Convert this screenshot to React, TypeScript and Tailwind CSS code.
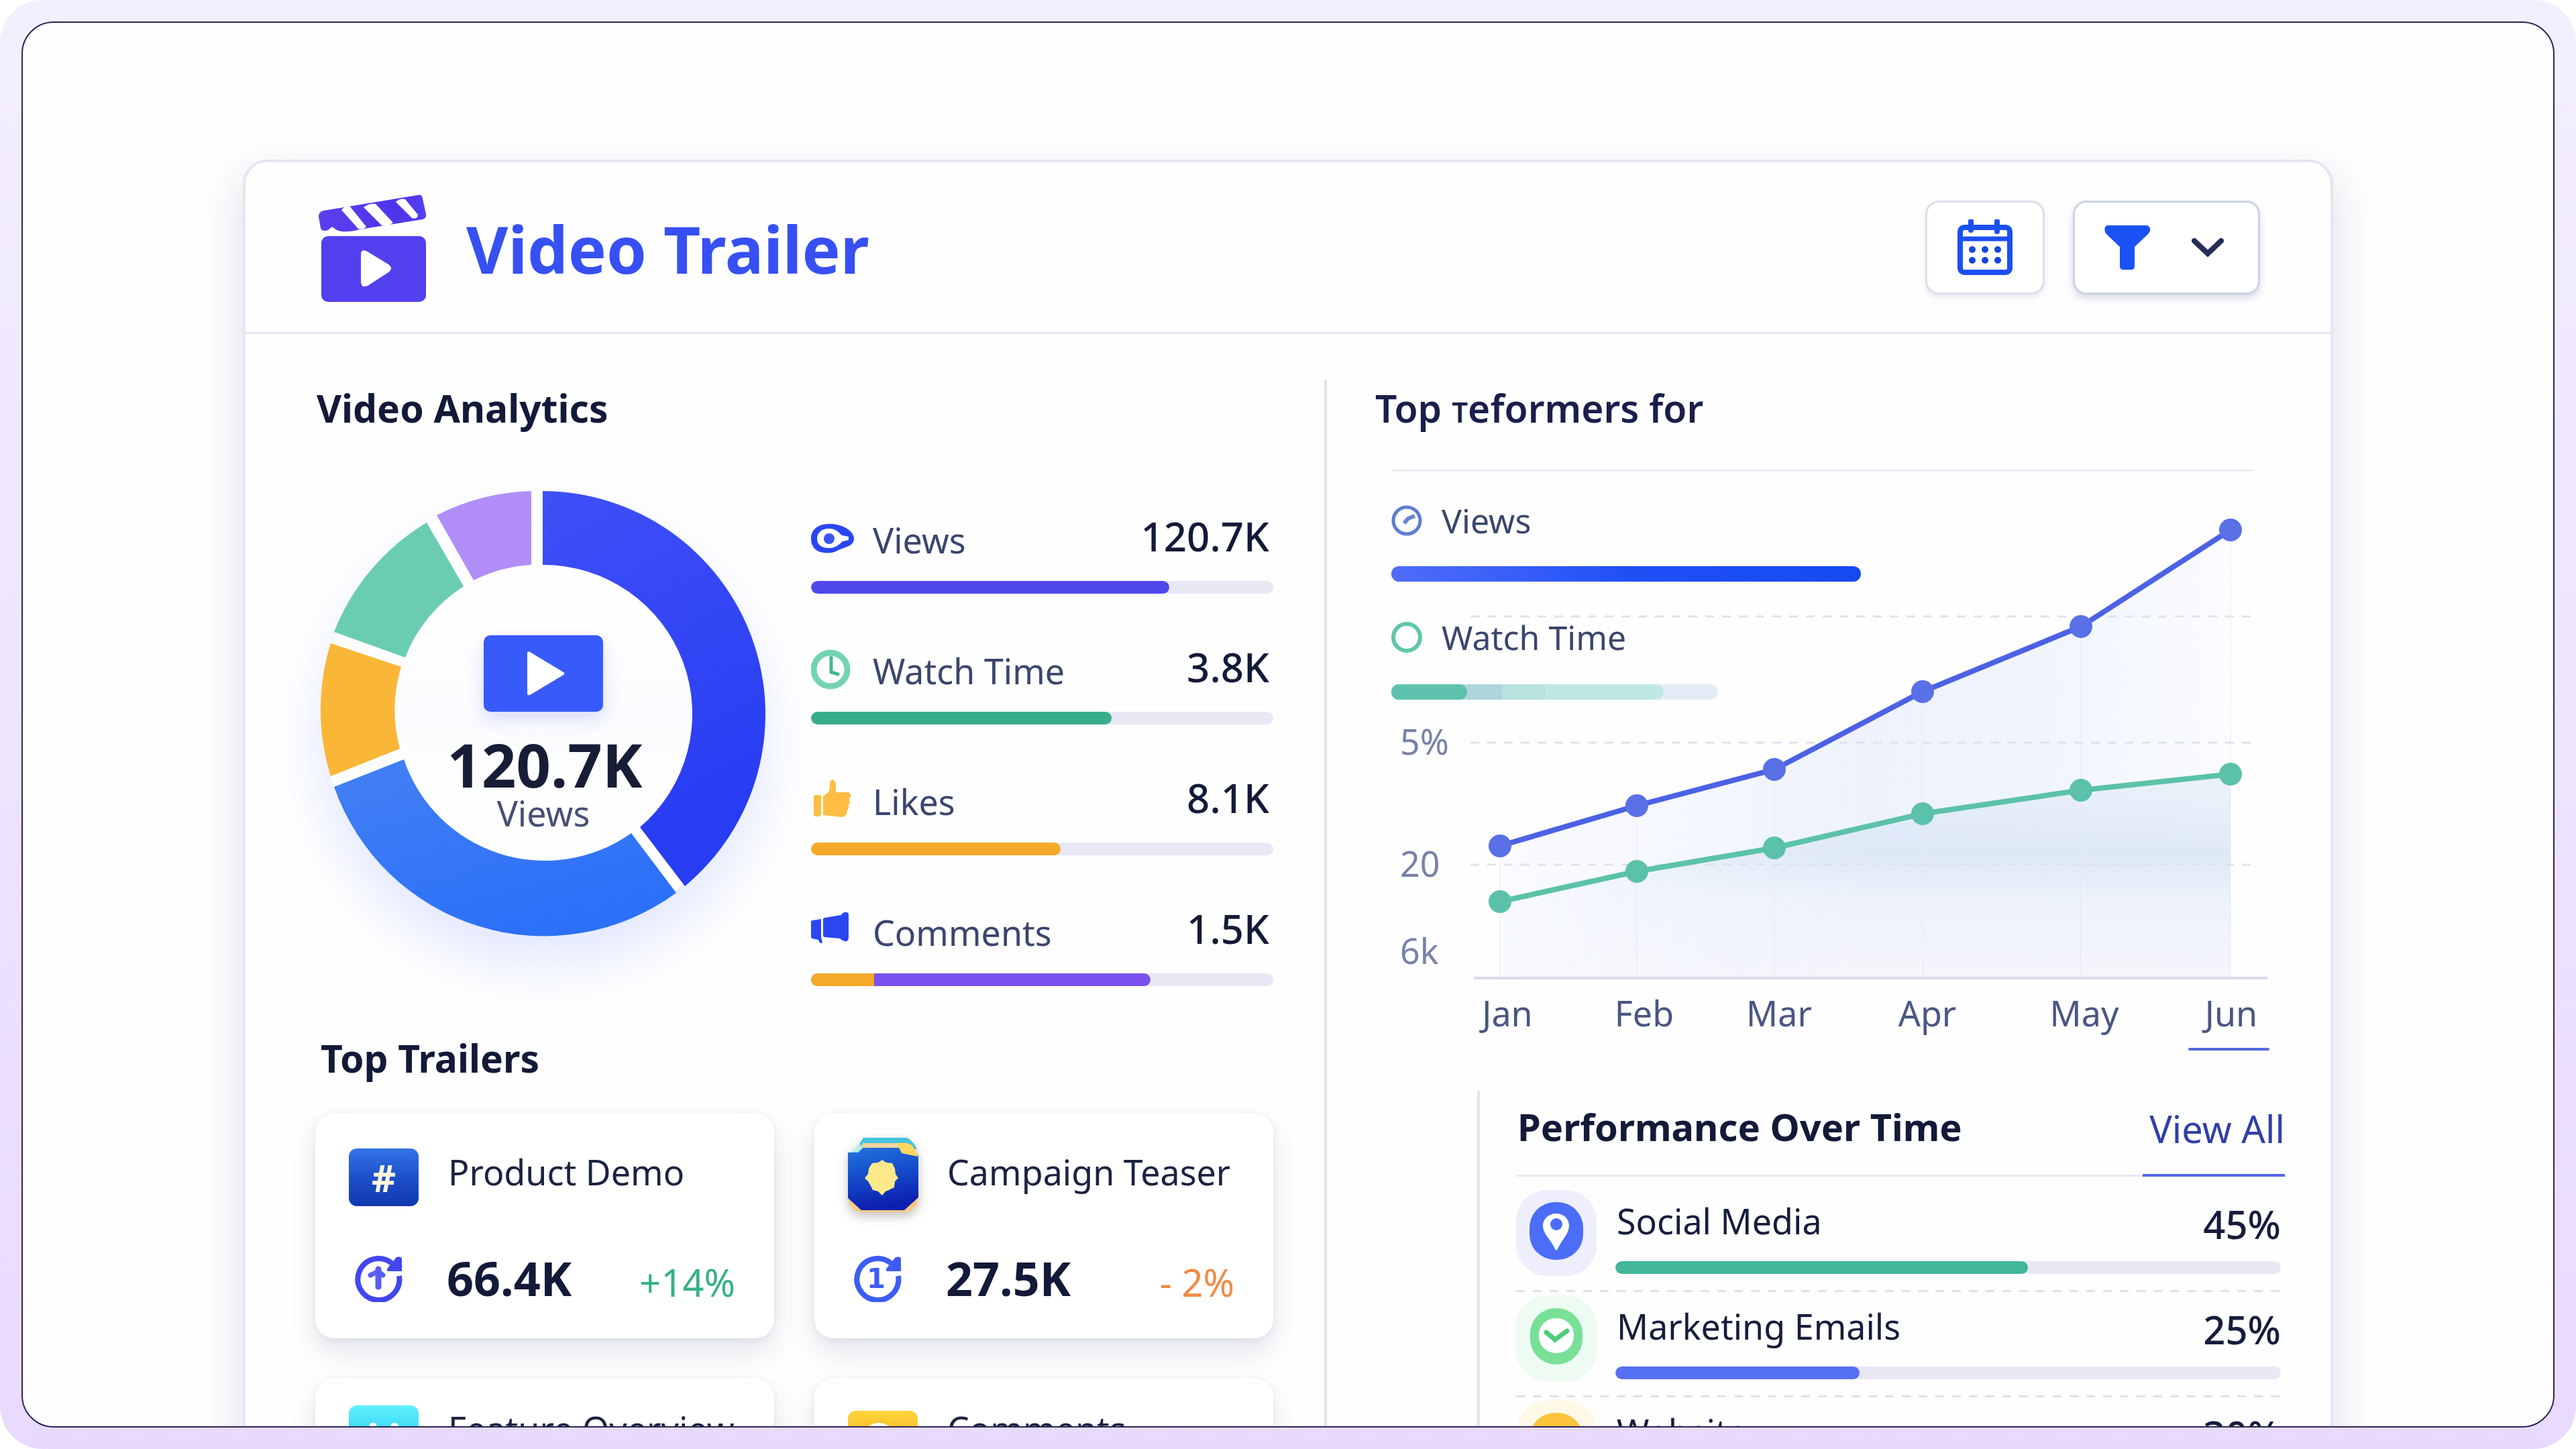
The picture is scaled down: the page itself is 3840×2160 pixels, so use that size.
import type { ReactNode } from "react";

interface Metric {
  id: string;
  label: string;
  value: string;
  percent: number;
  color: string;
  icon: ReactNode;
  lead?: number;
}

interface Trailer {
  id: string;
  name: string;
  views: string;
  change: string;
  up: boolean;
  mark: ReactNode;
  tile: ReactNode;
  padding: string;
}

interface Channel {
  id: string;
  label: string;
  share: string;
  percent: number;
  color: string;
  halo: string;
  icon: ReactNode;
}

function LogoIcon() {
  return (
    <svg viewBox="0 0 162 162" className="h-[162px] w-[162px] shrink-0" aria-hidden="true">
      <defs>
        <linearGradient id="logo" x1="0" y1="0" x2="1" y2="0">
          <stop offset="0" stopColor="#5a40ee" />
          <stop offset="0.75" stopColor="#4d35ea" />
          <stop offset="1" stopColor="#5340f2" />
        </linearGradient>
      </defs>
      <rect x="5" y="64" width="156" height="98" rx="10" fill="#523fee" />
      <path d="M64 91 Q64 83 72 86 L105 106 Q113 112 105 118 L74 138 Q64 142 64 132 Z" fill="#fff" />
      <path
        d="M1 35 Q1 28 8 26 L148 3 Q155 1 156 8 L161 31 Q162 37 156 39 L62 54 Q40 60 28 55 L21 50 L15 55 Q6 58 4 52 Z"
        fill="url(#logo)"
      />
      <path d="M35 25 Q41 17 48 20 L72 50 Q67 55 60 53 Z" fill="#fff" />
      <path d="M68 21 Q76 15 86 16 L112 44 Q104 50 95 48 Z" fill="#fff" />
      <path d="M116 13 Q122 7 130 9 L149 32 Q148 40 140 37 Z" fill="#fff" />
    </svg>
  );
}

function CalendarIcon() {
  return (
    <svg viewBox="0 0 82 84" className="h-[84px] w-[82px]" fill="none" aria-hidden="true">
      <rect x="4" y="12" width="74" height="67" rx="6" stroke="#1a4ff2" strokeWidth="8" />
      <path d="M4 29H78" stroke="#1a4ff2" strokeWidth="7" />
      <path d="M20 3V16M59 3V18" stroke="#1a4ff2" strokeWidth="8" strokeLinecap="round" />
      {[22, 41, 60].map((x) => (
        <g key={x} fill="#1745dc">
          <circle cx={x} cy="45" r="5" />
          <circle cx={x} cy="61" r="5" />
        </g>
      ))}
    </svg>
  );
}

function FilterIcon() {
  return (
    <svg viewBox="0 0 68 66" className="h-[66px] w-[68px]" aria-hidden="true">
      <path
        d="M4 0H64Q69 2 68 8L66 12L45 32V61Q45 66 40 66H28Q23 66 23 61V32L2 12Q-2 3 4 0Z"
        fill="#1a52f5"
      />
    </svg>
  );
}

function ChevronIcon() {
  return (
    <svg viewBox="0 0 48 28" className="h-[28px] w-[48px]" fill="none" aria-hidden="true">
      <path d="M4 4L24 23L44 4" stroke="#252e54" strokeWidth="8" strokeLinecap="round" />
    </svg>
  );
}

function EyeIcon() {
  return (
    <svg viewBox="0 0 64 64" className="h-16 w-16" aria-hidden="true">
      <path d="M0 32C0 17 12 10 28 10C46 10 64 20 64 32C64 42 53 44 43 48C34 53 27 54 20 53C8 52 0 45 0 32Z" fill="#2b47f2" />
      <path d="M9 32C9 22 18 16 28 17C39 18 42 24 46 27L56 29V34L47 36C42 41 36 46 27 46C17 46 9 42 9 32Z" fill="#fff" />
      <circle cx="27" cy="32" r="8" fill="#3a55f0" />
    </svg>
  );
}

function ClockIcon() {
  return (
    <svg viewBox="0 0 64 64" className="h-16 w-16" fill="none" aria-hidden="true">
      <circle cx="29" cy="32" r="25" stroke="#73d3b3" strokeWidth="9" />
      <path d="M30 14V36L40 39" stroke="#3fb795" strokeWidth="5" strokeLinecap="round" />
    </svg>
  );
}

function ThumbIcon() {
  return (
    <svg viewBox="0 0 64 64" className="h-16 w-16" fill="#fdbd42" aria-hidden="true">
      <rect x="4" y="24" width="11" height="32" rx="3" />
      <path d="M18 26L26 20C29 15 27 8 29 3C31 -1 37 2 37 9L37 20L55 20Q60 21 59 27L57 29L58 36L56 38L56 44L54 46L53 52Q51 57 45 57L26 55L18 54Z" />
    </svg>
  );
}

function MegaphoneIcon() {
  return (
    <svg viewBox="0 0 64 64" className="h-16 w-16" fill="#2b47f2" aria-hidden="true">
      <path d="M2 16L15 14V41L17 48Q15 52 12 48L11 45L2 43Q0 43 0 40V19Q0 16 2 16Z" />
      <path d="M21 12L45 8Q48 3 53 4Q56 4 56 8V42Q56 48 50 47Q46 46 43 43L21 41Q18 41 18 38V15Q18 12 21 12Z" />
    </svg>
  );
}

function RefreshIcon({ color, children }: { color: string; children: ReactNode }) {
  return (
    <svg viewBox="0 0 72 72" className="h-[72px] w-[72px]" fill="none" aria-hidden="true">
      <path d="M67 33A31 31 0 1 1 56 14" stroke={color} strokeWidth="8" />
      <path d="M63 5Q71 3 71 8V26H50Q47 24 51 20Z" fill={color} />
      {children}
    </svg>
  );
}

const upMark = (
  <RefreshIcon color="#4246ee">
    <path d="M36 23V49" stroke="#5a5cf0" strokeWidth="9" strokeLinecap="round" />
    <path d="M24 32L36 26L43 32" stroke="#5a5cf0" strokeWidth="7" strokeLinecap="round" />
  </RefreshIcon>
);

const firstMark = (
  <RefreshIcon color="#3d5cf5">
    <text x="34" y="51" textAnchor="middle" fontSize="40" fontWeight="700" fill="#3d5cf5" className="font-['DejaVu_Sans']">
      1
    </text>
  </RefreshIcon>
);

const hashTile = (
  <div className="flex h-[86px] w-[104px] items-center justify-center rounded-xl bg-linear-to-b from-[#3474e6] via-[#1d50cb] to-[#1038ae] text-[56px] leading-none font-bold text-[#fff6dd]">
    #
  </div>
);

const badgeTile = (
  <svg viewBox="0 0 106 112" className="-mt-4 h-[112px] w-[106px] drop-shadow-[0_6px_8px_rgba(60,50,40,0.3)]" aria-hidden="true">
    <defs>
      <linearGradient id="badge" x1="0" y1="0" x2="0.2" y2="1">
        <stop offset="0" stopColor="#2274dc" />
        <stop offset="0.55" stopColor="#1346c8" />
        <stop offset="1" stopColor="#0d1fae" />
      </linearGradient>
    </defs>
    <path d="M0 82L2 98Q8 109 20 111H86Q98 109 103 98L106 82Z" fill="#fcc983" />
    <path d="M23 0H88Q98 5 103 17L60 20L6 22Q12 20 16 11Z" fill="#45c4dd" />
    <path d="M22 8H78L86 18H18Z" fill="#f3d59c" />
    <path d="M0 22L14 22L22 15H78L105 26V89L84 108H20L0 90Z" fill="url(#badge)" />
    <path d="M2 20Q12 18 17 9L22 15L15 22Z" fill="#b5f2e4" />
    <path d="M73 8Q90 6 96 12L104 24V28L80 23Z" fill="#fbd65f" />
    <path
      d="M51 33L57 37L66 38L70 46L71 54L75 60L70 65L69 74L61 78L56 80L51 86L45 80L37 78L33 70L30 65L25 60L30 54L31 46L36 38L45 37Z"
      fill="#fde98a"
    />
  </svg>
);

const featureTile = (
  <svg viewBox="0 0 104 86" className="h-[86px] w-[104px]" aria-hidden="true">
    <defs>
      <linearGradient id="feature" x1="0" y1="0" x2="0" y2="1">
        <stop offset="0" stopColor="#5df3fd" />
        <stop offset="1" stopColor="#19b4e6" />
      </linearGradient>
    </defs>
    <rect width="104" height="86" rx="12" fill="url(#feature)" />
    <path d="M36 58V31M68 58V31" stroke="#fff" strokeWidth="11" strokeLinecap="round" />
  </svg>
);

const commentTile = (
  <svg viewBox="0 0 104 86" className="mt-2 h-[86px] w-[104px]" aria-hidden="true">
    <defs>
      <linearGradient id="comment" x1="0" y1="0" x2="0" y2="1">
        <stop offset="0" stopColor="#fdd43a" />
        <stop offset="1" stopColor="#f59d16" />
      </linearGradient>
    </defs>
    <rect width="104" height="86" rx="12" fill="url(#comment)" />
    <circle cx="46" cy="42" r="24" fill="#fff" />
  </svg>
);

const metrics: Metric[] = [
  { id: "views", label: "Views", value: "120.7K", percent: 77.5, color: "bg-[#5148ec]", icon: <EyeIcon /> },
  { id: "watch", label: "Watch Time", value: "3.8K", percent: 65, color: "bg-[#37ad8c]", icon: <ClockIcon /> },
  { id: "likes", label: "Likes", value: "8.1K", percent: 54, color: "bg-[#f5a928]", icon: <ThumbIcon /> },
  { id: "comments", label: "Comments", value: "1.5K", percent: 73.5, color: "bg-[#7b52ef]", icon: <MegaphoneIcon />, lead: 18.5 },
];

const trailers: Trailer[] = [
  { id: "demo", name: "Product Demo", views: "66.4K", change: "+14%", up: true, mark: upMark, tile: hashTile, padding: "pt-[52px]" },
  { id: "teaser", name: "Campaign Teaser", views: "27.5K", change: "- 2%", up: false, mark: firstMark, tile: badgeTile, padding: "pt-[52px]" },
  { id: "overview", name: "Feature Overview", views: "18.2K", change: "+9%", up: true, mark: upMark, tile: featureTile, padding: "pt-[40px]" },
  { id: "comments", name: "Comments", views: "12.1K", change: "+5%", up: true, mark: firstMark, tile: commentTile, padding: "pt-[40px]" },
];

const channels: Channel[] = [
  {
    id: "social",
    label: "Social Media",
    share: "45%",
    percent: 62,
    color: "bg-[#42b699]",
    halo: "bg-[#eeeefc]",
    icon: (
      <svg viewBox="0 0 80 86" className="h-[86px] w-[80px]" aria-hidden="true">
        <rect width="80" height="86" rx="38" fill="#4b6df8" />
        <path d="M40 17C51 17 59 25 59 35C59 48 47 57 42 70Q40 73 38 70C33 57 20 48 20 35C20 25 29 17 40 17Z" fill="#fff" />
        <circle cx="40" cy="33" r="9" fill="#4b6df8" />
      </svg>
    ),
  },
  {
    id: "emails",
    label: "Marketing Emails",
    share: "25%",
    percent: 36.7,
    color: "bg-[#5670f3]",
    halo: "bg-[#edfbf2]",
    icon: (
      <svg viewBox="0 0 80 86" className="h-[86px] w-[80px]" fill="none" aria-hidden="true">
        <rect x="1" y="1" width="78" height="84" rx="38" fill="#79e097" />
        <rect x="14" y="16" width="52" height="52" rx="25" fill="#fff" />
        <path d="M25 37L38 48L56 35" stroke="#4bcc7a" strokeWidth="7" strokeLinecap="round" />
      </svg>
    ),
  },
  {
    id: "website",
    label: "Website",
    share: "30%",
    percent: 30,
    color: "bg-[#f5a928]",
    halo: "bg-[#fef8e6]",
    icon: (
      <svg viewBox="0 0 80 86" className="h-[86px] w-[80px]" fill="none" aria-hidden="true">
        <rect width="80" height="86" rx="38" fill="#fbc43c" />
        <circle cx="40" cy="43" r="18" stroke="#fff" strokeWidth="6" />
      </svg>
    ),
  },
];

const months = [
  { label: "Jan", labelX: 173, x: 162, views: 561, watch: 644 },
  { label: "Feb", labelX: 377, x: 366, views: 501, watch: 599 },
  { label: "Mar", labelX: 578, x: 571, views: 447, watch: 564 },
  { label: "Apr", labelX: 799, x: 792, views: 331, watch: 513 },
  { label: "May", labelX: 1033, x: 1028, views: 234, watch: 478 },
  { label: "Jun", labelX: 1252, x: 1251, views: 90, watch: 454 },
];

function Donut() {
  return (
    <svg
      viewBox="0 0 664 664"
      className="col-start-1 row-start-1 h-[664px] w-[664px] overflow-visible drop-shadow-[0_44px_40px_rgba(60,100,255,0.14)]"
      aria-hidden="true"
    >
      <defs>
        <linearGradient id="seg-blue" x1="0" y1="0" x2="0.3" y2="1">
          <stop offset="0" stopColor="#3f50f7" />
          <stop offset="1" stopColor="#273cf3" />
        </linearGradient>
        <linearGradient id="seg-azure" x1="0" y1="0" x2="0.5" y2="1">
          <stop offset="0" stopColor="#4380f4" />
          <stop offset="1" stopColor="#2b70f8" />
        </linearGradient>
        <linearGradient id="hole" x1="0" y1="0" x2="0" y2="1">
          <stop offset="0.3" stopColor="#fefefe" />
          <stop offset="0.5" stopColor="#fafbfe" />
          <stop offset="0.7" stopColor="#fefefe" />
        </linearGradient>
      </defs>
      <circle cx="331" cy="332" r="330" fill="url(#hole)" />
      <path d="M331 0A333 333 0 0 1 543 589L476 501A222 222 0 0 0 331 110Z" fill="url(#seg-blue)" />
      <path d="M530 599A332 332 0 0 1 20 441L124 400A222 222 0 0 0 463 510Z" fill="url(#seg-azure)" />
      <path d="M15 425A332 332 0 0 1 15 227L120 262A222 222 0 0 0 118 384Z" fill="#fab636" />
      <path d="M20 210A332 332 0 0 1 158 47L213 142A222 222 0 0 0 126 248Z" fill="#6acdb1" />
      <path d="M173 36A332 332 0 0 1 314 0V110A222 222 0 0 0 228 133Z" fill="#b18ef7" />
    </svg>
  );
}

function ProgressBar({ label, percent, color, lead }: { label: string; percent: number; color: string; lead?: number }) {
  return (
    <div
      role="progressbar"
      aria-label={label}
      aria-valuenow={percent}
      aria-valuemin={0}
      aria-valuemax={100}
      className="h-[19px] w-full overflow-hidden rounded-full bg-[#e7e8f4]"
    >
      <div className={`h-full overflow-hidden rounded-full ${color}`} style={{ width: `${percent}%` }}>
        {lead && <div className="h-full bg-[#f5a928]" style={{ width: `${lead}%` }} />}
      </div>
    </div>
  );
}

function TrailerCard({ trailer }: { trailer: Trailer }) {
  return (
    <article
      className={`rounded-[28px] bg-white pr-[58px] pb-[41px] pl-[50px] shadow-[0_20px_40px_rgba(50,60,110,0.13),0_2px_10px_rgba(50,60,110,0.08)] ${trailer.padding}`}
    >
      <div className="flex h-[86px] items-start gap-[44px]">
        <div className="w-[104px] shrink-0">{trailer.tile}</div>
        <h3 className="text-[52px] leading-[70px] whitespace-nowrap text-[#1b2340]">{trailer.name}</h3>
      </div>
      <div className="mt-[58px] flex h-[98px] items-center">
        <div className="w-[146px] shrink-0 pl-[8px]">{trailer.mark}</div>
        <span className="text-[70px] leading-[78px] font-bold text-[#131a38]">{trailer.views}</span>
        <span className={`mt-3 ml-auto text-[56px] leading-none whitespace-nowrap ${trailer.up ? "text-[#35b285]" : "text-[#f28a45]"}`}>
          {trailer.change}
        </span>
      </div>
    </article>
  );
}

function TrendChart() {
  const viewsLine = months.map((m) => `${m.x},${m.views}`).join(" ");
  const watchLine = months.map((m) => `${m.x},${m.watch}`).join(" ");

  return (
    <svg viewBox="0 0 1332 868" className="col-start-1 row-start-1 w-full" role="img" aria-label="Views and watch time from January to June">
      <defs>
        <linearGradient id="area-views" x1="0" y1="0" x2="1" y2="0">
          <stop offset="0" stopColor="#f5f8fe" stopOpacity="0.5" />
          <stop offset="0.5" stopColor="#edf2fd" />
          <stop offset="0.75" stopColor="#f1f5fd" />
          <stop offset="1" stopColor="#fafcfe" />
        </linearGradient>
        <linearGradient id="area-watch" x1="0" y1="0" x2="0" y2="1">
          <stop offset="0.1" stopColor="#dbe7f6" stopOpacity="0.5" />
          <stop offset="0.4" stopColor="#dce9f5" />
          <stop offset="0.6" stopColor="#ecf2fb" />
          <stop offset="1" stopColor="#f5f5fb" />
        </linearGradient>
        <linearGradient id="fade" x1="0" y1="0" x2="1" y2="0">
          <stop offset="0" stopColor="#fff" stopOpacity="0.1" />
          <stop offset="0.5" stopColor="#fff" />
        </linearGradient>
        <mask id="fade-left">
          <rect x="162" y="400" width="1092" height="360" fill="url(#fade)" />
        </mask>
      </defs>
      <path d="M2 1H1285" stroke="#e5e6f1" strokeWidth="3" />
      <polygon points={`162,758 ${viewsLine} 1251,758`} fill="url(#area-views)" />
      <polygon points={`162,758 ${watchLine} 1251,758`} fill="url(#area-watch)" mask="url(#fade-left)" />
      {months.map((m) => (
        <path key={m.label} d={`M${m.x} ${m.views}V758`} stroke="#e6eaf5" strokeWidth="2" opacity="0.5" />
      ))}
      {[219, 407, 589].map((y) => (
        <path key={y} d={`M118 ${y}H1292`} stroke="#dfe2ee" strokeWidth="3" strokeDasharray="13 12" />
      ))}
      <path d="M123 758H1306" stroke="#d9dbea" strokeWidth="4" />
      <polyline points={viewsLine} fill="none" stroke="#4c62e4" strokeWidth="8" />
      <polyline points={watchLine} fill="none" stroke="#5bc2a8" strokeWidth="8" />
      {months.map((m) => (
        <g key={m.label}>
          <circle cx={m.x} cy={m.views} r="17" fill="#5a70e6" />
          <circle cx={m.x} cy={m.watch} r="17" fill="#5bc1ab" />
        </g>
      ))}
      <g fontSize="52" fill="#7782a8">
        <text x="13" y="425">5%</text>
        <text x="13" y="607">20</text>
        <text x="13" y="737">6k</text>
      </g>
      <g fontSize="52" fill="#4a5682" textAnchor="middle">
        {months.map((m) => (
          <text key={m.label} x={m.labelX} y="830">{m.label}</text>
        ))}
      </g>
      <path d="M1190 864H1307" stroke="#5068de" strokeWidth="4" strokeLinecap="round" />
    </svg>
  );
}

function ChartLegend() {
  return (
    <div className="z-10 col-start-1 row-start-1 self-start pt-[41px]">
      <div className="flex items-center gap-[29px]">
        <svg viewBox="0 0 46 46" className="h-[46px] w-[46px]" fill="none" aria-hidden="true">
          <circle cx="23" cy="23" r="20" stroke="#5f7bd2" strokeWidth="5" />
          <path d="M19 27L25 20L35 16" stroke="#6a86cd" strokeWidth="6" />
        </svg>
        <span className="text-[50px] leading-[70px] text-[#3a466c]">Views</span>
      </div>
      <div className="mt-[33px] h-[23px] w-[700px] rounded-full bg-linear-to-r from-[#4f6cfa] via-[#1f50f6] to-[#154af2]" />
      <div className="mt-[48px] flex items-center gap-[29px]">
        <svg viewBox="0 0 46 46" className="h-[46px] w-[46px]" fill="none" aria-hidden="true">
          <circle cx="23" cy="23" r="20" stroke="#5fc6aa" strokeWidth="6" />
        </svg>
        <span className="text-[50px] leading-[70px] text-[#3a466c]">Watch Time</span>
      </div>
      <div className="mt-[35px] flex h-[23px] w-[487px] overflow-hidden rounded-full bg-[#e6ecf7]">
        <div className="flex w-[406px] overflow-hidden rounded-r-full bg-[#c0e8e2]">
          <div className="flex w-[230px] bg-[#b8e2de]">
            <div className="flex w-[165px] bg-[#aed5dc]">
              <div className="w-[113px] rounded-r-full bg-[#5fc2ae]" />
            </div>
          </div>
        </div>
      </div>
    </div>
  );
}

function ChannelRow({ channel }: { channel: Channel }) {
  return (
    <li>
      <div className="flex h-[154px] gap-[28px] pt-[5px]">
        <div className={`flex h-[128px] w-[120px] shrink-0 justify-center rounded-[46px] pt-[18px] ${channel.halo}`}>{channel.icon}</div>
        <div className="flex-1 pr-1.5">
          <div className="flex h-[106px] items-start justify-between pt-[8px] text-[#161d3b]">
            <span className="pl-[2px] text-[52px] leading-[76px]">{channel.label}</span>
            <span className="text-[58px] leading-[86px] font-medium">{channel.share}</span>
          </div>
          <ProgressBar label={channel.label} percent={channel.percent} color={channel.color} />
        </div>
      </div>
      <div className="h-[3px] bg-[repeating-linear-gradient(90deg,#dfe1ea_0_13px,transparent_13px_25px)]" />
    </li>
  );
}

export default function App() {
  return (
    <div className="h-screen overflow-hidden bg-white font-['Noto_Sans',sans-serif]">
      <div className="h-full rounded-[64px] bg-linear-to-b from-[#f3effe] to-[#e8dafd] p-8">
        <main className="h-full overflow-hidden rounded-[48px] border-2 border-[#2a2757] bg-[#fdfdfe] px-[328px] pt-[204px]">
          <div className="rounded-[36px] border-4 border-[#e4e6f0] bg-[#fefefe] shadow-[0_30px_60px_rgba(50,60,120,0.16)]">
            <header className="flex h-[256px] items-center border-b-[3px] border-[#e4e6f0] pr-[105px] pl-[108px]">
              <LogoIcon />
              <h1 className="mt-1 ml-[59px] text-[96px] leading-none font-bold text-[#3650f3]">Video Trailer</h1>
              <div className="ml-auto flex gap-[42px]">
                <button
                  type="button"
                  aria-label="Pick dates"
                  className="flex h-[140px] w-[178px] items-center justify-center rounded-[20px] border-[3px] border-[#dcdfeb] bg-white shadow-[0_4px_8px_rgba(60,80,140,0.12)]"
                >
                  <CalendarIcon />
                </button>
                <button
                  type="button"
                  aria-label="Filter"
                  aria-haspopup="menu"
                  className="flex h-[140px] items-center gap-[62px] rounded-[20px] border-[3px] border-[#ccd3e6] bg-white pr-[51px] pl-[44px] shadow-[0_6px_12px_rgba(60,80,140,0.2)]"
                >
                  <FilterIcon />
                  <ChevronIcon />
                </button>
              </div>
            </header>

            <div className="flex">
              <section className="w-[1608px] shrink-0 pt-[73px] pr-[76px] pb-[100px] pl-[104px]">
                <h2 className="pl-[2px] text-[57px] leading-[74px] font-bold text-[#131a38]">Video Analytics</h2>
                <div className="mt-[87px] flex items-start">
                  <div className="ml-[8px] grid shrink-0">
                    <Donut />
                    <div className="z-10 col-start-1 row-start-1 flex flex-col items-center pt-[215px]">
                      <div className="flex h-[114px] w-[178px] items-center justify-center rounded-[10px] bg-[#395afa] shadow-[0_10px_24px_rgba(60,90,220,0.2)]">
                        <svg viewBox="0 0 56 66" className="ml-2 h-[66px] w-[56px]" aria-hidden="true">
                          <path d="M0 3Q0 -1 4 1L54 31Q57 33 54 35L4 65Q0 66 0 63Z" fill="#fff" />
                        </svg>
                      </div>
                      <strong className="mt-[33px] pl-1 text-[90px] leading-[90px] font-bold text-[#171d35]">120.7K</strong>
                      <span className="text-[52px] leading-[56px] text-[#465073]">Views</span>
                    </div>
                  </div>

                  <ul className="mt-[29px] ml-[67px] flex flex-1 flex-col gap-[71px]">
                    {metrics.map((metric) => (
                      <li key={metric.id}>
                        <div className="flex h-[84px] items-center pr-[6px]">
                          {metric.icon}
                          <span className="ml-[28px] pt-1 text-[52px] leading-none text-[#3a466c]">{metric.label}</span>
                          <span className="ml-auto pb-2 text-[60px] leading-none font-medium text-[#131a38]">{metric.value}</span>
                        </div>
                        <div className="pt-[21px]">
                          <ProgressBar label={metric.label} percent={metric.percent} color={metric.color} lead={metric.lead} />
                        </div>
                      </li>
                    ))}
                  </ul>
                </div>

                <h2 className="mt-[70px] pl-[8px] text-[57px] leading-[74px] font-bold text-[#131a38]">Top Trailers</h2>
                <div className="mt-[46px] grid grid-cols-2 gap-[60px]">
                  {trailers.map((trailer) => (
                    <TrailerCard key={trailer.id} trailer={trailer} />
                  ))}
                </div>
              </section>

              <section className="mt-[68px] flex flex-1 flex-col border-l-4 border-[#e0e2ed] pt-[5px] pr-[68px] pl-[72px]">
                <h2 className="text-[57px] leading-[74px] font-semibold text-[#191f4a]">
                  Top <span className="text-[42px] leading-none">T</span>eformers for
                </h2>
                <div className="mt-[55px] ml-[24px] grid">
                  <TrendChart />
                  <ChartLegend />
                </div>

                <div className="mt-[58px] ml-[152px] flex-1 border-l-4 border-[#e2e4ee] pt-[16px] pl-[54px]">
                  <div className="flex h-[112px] justify-between border-b-[3px] border-[#e8eaf2]">
                    <h2 className="pl-[2px] text-[56px] leading-[74px] font-bold text-[#131a38]">Performance Over Time</h2>
                    <a href="#performance" className="-mb-[3px] border-b-4 border-[#5066f0] pl-[10px] text-[56px] leading-[80px] text-[#3140a6]">
                      View All
                    </a>
                  </div>
                  <ul className="pt-[15px]">
                    {channels.map((channel) => (
                      <ChannelRow key={channel.id} channel={channel} />
                    ))}
                  </ul>
                </div>
              </section>
            </div>
          </div>
        </main>
      </div>
    </div>
  );
}
